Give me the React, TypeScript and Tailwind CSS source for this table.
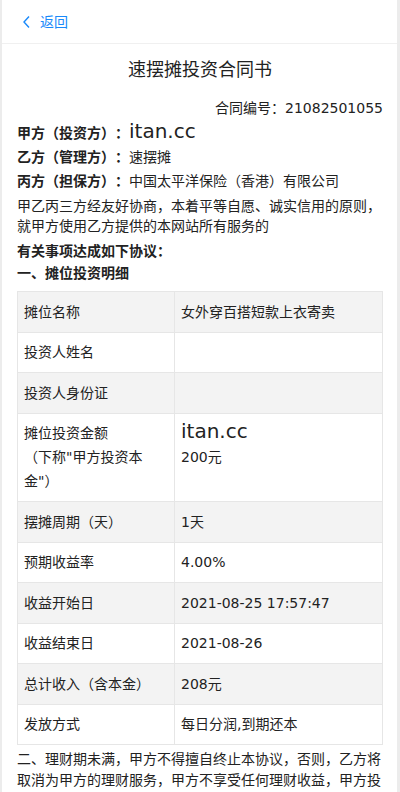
import React from "react"

// DejaVu carries a narrow "：", so the fullwidth colon is set in the CJK face
function Colon() {
  return <span className="font-['Noto_Sans_CJK_SC',sans-serif]">：</span>
}

const rows: { label: React.ReactNode; value: React.ReactNode }[] = [
  { label: "摊位名称", value: "女外穿百搭短款上衣寄卖" },
  { label: "投资人姓名", value: "" },
  { label: "投资人身份证", value: "" },
  {
    label: (
      <>
        摊位投资金额
        <br />
        （下称"甲方投资本
        <br />
        金"）
      </>
    ),
    value: (
      <>
        <div className="-mt-[2px] mb-[2px] text-[20px] leading-[24px]">itan.cc</div>
        <div>200元</div>
      </>
    ),
  },
  { label: "摆摊周期（天）", value: "1天" },
  { label: "预期收益率", value: "4.00%" },
  { label: "收益开始日", value: "2021-08-25 17:57:47" },
  { label: "收益结束日", value: "2021-08-26" },
  { label: "总计收入（含本金）", value: "208元" },
  { label: "发放方式", value: "每日分润,到期还本" },
]

export default function App() {
  return (
    <div className="min-h-[792px] bg-[#ececec] pl-[2px] pr-[3px] font-['DejaVu_Sans','Noto_Sans_CJK_SC',sans-serif] text-[#222] [text-spacing-trim:space-all]">
      <div className="min-h-[792px] bg-white">
        {/* Header */}
        <div className="flex h-[44px] items-center border-b border-[#f0f0f0] pl-[20px] text-[14px] text-[#1989fa]">
          <svg width="10" height="14" viewBox="0 0 10 14" fill="none" className="mr-[8px]">
            <polyline points="7,1.5 2,7 7,12.5" stroke="#1989fa" strokeWidth="1.4" />
          </svg>
          <span className="font-['Noto_Sans_CJK_SC',sans-serif]">返回</span>
        </div>

        <div className="px-[15px] pr-[14px] text-[14px]">
          <h1 className="mt-[14px] text-center text-[18px] leading-[24px]">速摆摊投资合同书</h1>
          <p className="mt-[15px] text-right leading-[20px]">
            合同编号<Colon />21082501055
          </p>

          <p className="mt-[2px] leading-[24px]">
            <b>
              甲方（投资方）<Colon />
            </b>
            <span className="text-[20px] leading-[20px]">itan.cc</span>
          </p>
          <p className="mt-[1px] leading-[20px]">
            <b>
              乙方（管理方）<Colon />
            </b>
            速摆摊
          </p>
          <p className="mt-[3px] leading-[20px]">
            <b>
              丙方（担保方）<Colon />
            </b>
            中国太平洋保险（香港）有限公司
          </p>
          <p className="mt-[5px] leading-[20px]">
            甲乙丙三方经友好协商，本着平等自愿、诚实信用的原则，就甲方使用乙方提供的本网站所有服务的
          </p>
          <p className="mt-[4px] font-bold leading-[20px]">
            有关事项达成如下协议<Colon />
          </p>
          <p className="mt-[2px] font-bold leading-[20px]">一、摊位投资明细</p>

          {/* Detail table */}
          <table className="mt-[8px] w-full border-collapse border border-[#e6e6e6]">
            <tbody>
              {rows.map((r, i) => (
                <tr key={i} className={i % 2 === 0 ? "bg-[#f3f3f3]" : "bg-white"}>
                  <td className="w-[157px] border border-[#e6e6e6] px-[6px] py-[7.75px] align-top leading-[24px]">
                    {r.label}
                  </td>
                  <td className="border border-[#e6e6e6] px-[6px] py-[7.75px] align-top leading-[24px]">
                    {r.value}
                  </td>
                </tr>
              ))}
            </tbody>
          </table>

          <p className="mt-[4px] leading-[21px]">
            二、理财期未满，甲方不得擅自终止本协议，否则，乙方将取消为甲方的理财服务，甲方不享受任何理财收益，甲方投资本金将在扣除相关费用后退还。
          </p>
        </div>
      </div>
    </div>
  )
}
